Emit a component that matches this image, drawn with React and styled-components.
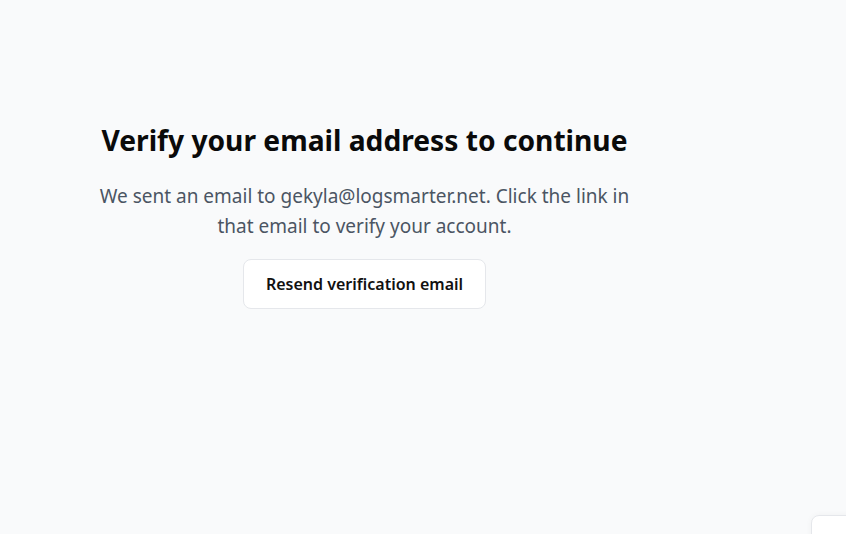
import styled, { createGlobalStyle } from 'styled-components';

const GlobalStyle = createGlobalStyle`
  html, body {
    margin: 0;
    padding: 0;
    background-color: #f9fafb;
    font-family: "Noto Sans", "Open Sans", sans-serif;
  }
  #root {
    min-height: 100vh;
  }
`;

const App = () => {
  return (
    <>
      <GlobalStyle />
      <Page>
        <Main>
          <Card>
            <Title>Verify your email address to continue</Title>
            <Message>We sent an email to gekyla@logsmarter.net. Click the link in that email to verify your account.</Message>
            <ResendButton type="button">Resend verification email</ResendButton>
          </Card>
        </Main>
      </Page>
      <CornerWidget />
    </>
  );
};

export default App;

const Page = styled.div`
  display: flex;
  min-height: 100vh;
`;

const Main = styled.main`
  flex: 0 0 729px;
  display: flex;
  justify-content: center;
  padding-top: 120px;
`;

const Card = styled.div`
  display: flex;
  flex-direction: column;
  align-items: center;
  width: 540px;
  text-align: center;
`;

const Title = styled.h1`
  margin: 0;
  font-size: 28.2px;
  line-height: 40px;
  font-weight: 700;
  color: #0a0a0a;
  white-space: nowrap;
`;

const Message = styled.p`
  margin: 21px 0 0;
  font-size: 19px;
  line-height: 30px;
  color: #4b5563;
`;

const ResendButton = styled.button`
  margin-top: 18px;
  height: 50px;
  padding: 0 22px;
  background: #ffffff;
  border: 1px solid #e5e7eb;
  border-radius: 8px;
  font-family: inherit;
  font-size: 16px;
  font-weight: 600;
  color: #111111;
  cursor: pointer;
`;

const CornerWidget = styled.div`
  position: fixed;
  left: 811px;
  top: 515px;
  width: 80px;
  height: 80px;
  background: #ffffff;
  border: 1px solid #e5e7eb;
  border-radius: 8px;
  box-shadow: 0 0 6px rgba(0, 0, 0, 0.04);
`;
